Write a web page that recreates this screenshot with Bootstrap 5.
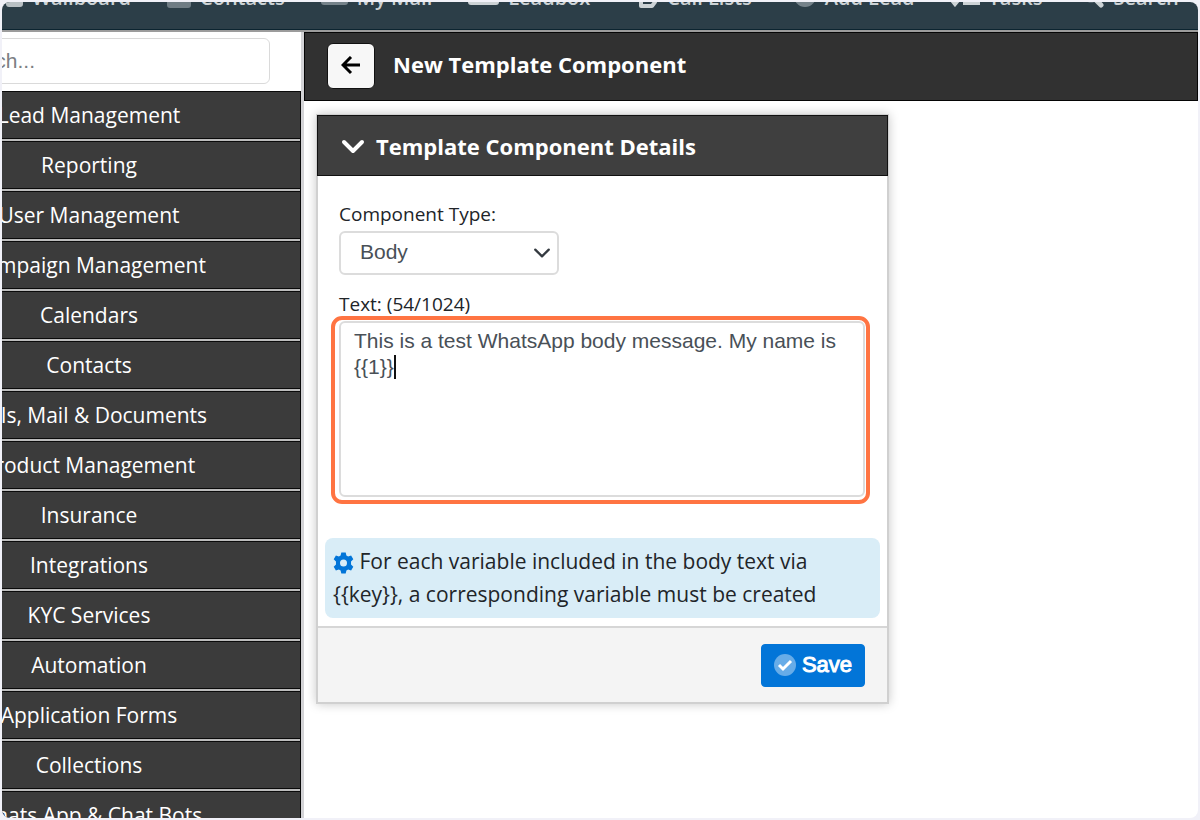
<!DOCTYPE html>
<html lang="en">
<head>
<meta charset="utf-8">
<meta name="viewport" content="width=device-width, initial-scale=1">
<title>New Template Component</title>
<link rel="stylesheet" href="https://cdn.jsdelivr.net/npm/bootstrap@5.3.0/dist/css/bootstrap.min.css">
<style>
body { background: #f1f1f8; font-family: "Open Sans", "Noto Sans", sans-serif; color: #212529; }
.app-frame { height: 100vh; padding: 2px; }
.app-window { background: #fff; border-radius: 8px; }
/* the top bar and the side menu are scrolled partly out of the window */
.top-bar { background: #2c3e48; border-bottom: 1px solid #0c2430; height: 28px; }
.top-bar nav { margin-top: -18px; gap: 36px; }
.top-bar a { color: #ccd2d5; font-size: 20px; font-weight: 600; line-height: 28px; gap: 9px; }
.below-bar { border-top: 2px solid #9c9c9c; }
.side-menu { width: 302px; border-right: 3px solid #d3d3d6; }
.side-inner { width: 424px; margin-left: -125px; }
.side-search { padding: 6px 31px 7px; }
.side-search input { height: 46px; font-family: "Liberation Sans", sans-serif; font-size: 21px; border-color: #dadada; padding-left: 42px; }
.side-search input::placeholder { color: #7c8084; }
.side-item { height: 50px; background: #3b3b3b; border: 1px solid #0a0a0a; border-bottom: 0; color: #fff; font-size: 21px; font-weight: 500; box-shadow: inset 0 -2px #bcbcbc, inset 0 -3px #0a0a0a; padding-bottom: 2px; }
.page-head { background: #313131; border: 1px solid #050505; height: 69px; padding: 0 23px 2px 22px; gap: 18px; }
.page-head h1 { font-size: 22px; font-weight: 700; line-height: 30px; padding-bottom: 4px; }
.back-btn { width: 48px; height: 46px; background: #f7f7f7; border: 1px solid #111; border-radius: 6px; }
.main-area { padding: 13px 12px; }
.details-card { max-width: 573px; border: 2px solid #d0d0d0; border-radius: 0; box-shadow: 0 0 10px rgba(0,0,0,.22); }
.details-head { height: 61px; margin: -1px -1px 0; background: #3f3f3f; border: 1px solid #111; padding: 0 23px; gap: 11px; }
.details-head h2 { font-size: 22px; font-weight: 700; line-height: 32px; }
.details-body { padding: 25px 22px 0 21px; }
.field-label { font-size: 19px; line-height: 26px; margin-bottom: 4px; }
.type-select { width: 220px; height: 44px; font-family: "Liberation Sans", sans-serif; font-size: 21px; line-height: 28px; padding: 4px 40px 6px 19px; color: #495057; border: 2px solid #dcdcdc; background-position: right 6px center; background-size: 18px 18px; margin-bottom: 16px; }
.text-wrap::after { content: ""; position: absolute; inset: -5px -5px -7px -8px; border: 4px solid #ff7442; border-radius: 11px; pointer-events: none; }
.text-wrap textarea { display: block; height: 176px; resize: none; font-family: "Liberation Sans", sans-serif; font-size: 21px; line-height: 26px; padding: 5px 8px 6px 13px; color: #495057; border: 2px solid #dcdcdc; }
.caret { position: absolute; left: 55px; top: 34px; width: 2px; height: 24px; background: #111; }
.hint { background: #d9edf7; border-radius: 8px; margin: 41px 7px 8px; padding: 7px 24px 7px 8px; font-size: 21px; line-height: 33px; }
.details-foot { background: #f4f4f4; border-top: 2px solid #d6d6d6; padding: 16px 22px 15px; }
.save-btn { --bs-btn-bg: #0275d8; --bs-btn-border-color: #0275d8; width: 104px; height: 43px; padding: 0 0 2px; gap: 6px; font-family: "Liberation Sans", sans-serif; font-size: 22px; line-height: 28px; border-radius: 4px; -webkit-text-stroke: 1px #fff; }
</style>
<script src="https://cdn.jsdelivr.net/npm/bootstrap@5.3.0/dist/js/bootstrap.bundle.min.js"></script>
</head>
<body>
<div class="app-frame">
<div class="app-window h-100 overflow-hidden d-flex flex-column">
  <header class="top-bar flex-shrink-0 overflow-hidden">
    <nav class="d-flex text-nowrap ps-1">
      <a href="#" class="d-flex align-items-center text-decoration-none"><svg width="17" height="18" viewBox="0 0 17 18"><rect width="17" height="18" rx="3" fill="#b9c0c4"/></svg>Wallboard</a>
      <a href="#" class="d-flex align-items-center text-decoration-none"><svg width="24" height="20" viewBox="0 0 24 20"><rect width="24" height="20" rx="3" fill="#6f7c84"/></svg>Contacts</a>
      <a href="#" class="d-flex align-items-center text-decoration-none"><svg width="27" height="18" viewBox="0 0 27 18"><rect width="27" height="16" rx="3" fill="#75828a"/></svg>My Mail</a>
      <a href="#" class="d-flex align-items-center text-decoration-none"><svg width="31" height="18" viewBox="0 0 31 18"><rect width="31" height="16" rx="3" fill="#ccd2d5"/></svg>Leadbox</a>
      <a href="#" class="d-flex align-items-center text-decoration-none"><svg width="32" height="20" viewBox="0 0 32 20"><path d="M15 2h14v12l-3 4H15z" fill="none" stroke="#ccd2d5" stroke-width="4" stroke-linejoin="round"/></svg>Call Lists</a>
      <a href="#" class="d-flex align-items-center text-decoration-none"><svg width="28" height="20" viewBox="0 0 28 20"><circle cx="17" cy="8" r="11" fill="#75828a"/></svg>Add Lead</a>
      <a href="#" class="d-flex align-items-center text-decoration-none"><svg width="29" height="18" viewBox="0 0 29 18"><path d="M0 10l4 5 5-6M12 14h17" fill="none" stroke="#ccd2d5" stroke-width="4"/></svg>Tasks</a>
      <a href="#" class="d-flex align-items-center text-decoration-none"><svg width="26" height="22" viewBox="0 0 26 22"><circle cx="13" cy="6" r="8" fill="none" stroke="#75828a" stroke-width="3"/><path d="M17 12l6 6" stroke="#ccd2d5" stroke-width="5" stroke-linecap="round"/></svg>Search</a>
    </nav>
  </header>
  <div class="below-bar d-flex flex-grow-1 overflow-hidden">
    <aside class="side-menu flex-shrink-0 overflow-hidden">
      <div class="side-inner">
        <div class="side-search"><input type="search" class="form-control" placeholder="Search..." aria-label="Search"></div>
        <nav class="text-center">
          <a href="#" class="side-item d-flex align-items-center justify-content-center text-decoration-none">Lead Management</a>
          <a href="#" class="side-item d-flex align-items-center justify-content-center text-decoration-none">Reporting</a>
          <a href="#" class="side-item d-flex align-items-center justify-content-center text-decoration-none">User Management</a>
          <a href="#" class="side-item d-flex align-items-center justify-content-center text-decoration-none">Campaign Management</a>
          <a href="#" class="side-item d-flex align-items-center justify-content-center text-decoration-none">Calendars</a>
          <a href="#" class="side-item d-flex align-items-center justify-content-center text-decoration-none">Contacts</a>
          <a href="#" class="side-item d-flex align-items-center justify-content-center text-decoration-none">Calls, Mail &amp; Documents</a>
          <a href="#" class="side-item d-flex align-items-center justify-content-center text-decoration-none">Product Management</a>
          <a href="#" class="side-item d-flex align-items-center justify-content-center text-decoration-none">Insurance</a>
          <a href="#" class="side-item d-flex align-items-center justify-content-center text-decoration-none">Integrations</a>
          <a href="#" class="side-item d-flex align-items-center justify-content-center text-decoration-none">KYC Services</a>
          <a href="#" class="side-item d-flex align-items-center justify-content-center text-decoration-none">Automation</a>
          <a href="#" class="side-item d-flex align-items-center justify-content-center text-decoration-none">Application Forms</a>
          <a href="#" class="side-item d-flex align-items-center justify-content-center text-decoration-none">Collections</a>
          <a href="#" class="side-item d-flex align-items-center justify-content-center text-decoration-none">Whats App &amp; Chat Bots</a>
        </nav>
      </div>
    </aside>
    <main class="flex-grow-1">
      <div class="page-head d-flex align-items-center text-white">
        <button type="button" class="back-btn d-flex align-items-center justify-content-center p-0" aria-label="Back">
          <svg width="20" height="20" viewBox="0 0 20 20" fill="none" stroke="#000" stroke-width="3"><path d="M10 1L2 9l8 8M2 9h17"/></svg>
        </button>
        <h1 class="mb-0">New Template Component</h1>
      </div>
      <div class="main-area">
      <form class="details-card card">
        <div class="details-head card-header rounded-0 d-flex align-items-center text-white">
          <svg width="24" height="16" viewBox="0 0 24 16" fill="none" stroke="#fff" stroke-width="4" stroke-linecap="round" stroke-linejoin="round"><path d="M3 4l9 9 9-9"/></svg>
          <h2 class="mb-0">Template Component Details</h2>
        </div>
        <div class="details-body">
          <label for="ctype" class="field-label d-block">Component Type:</label>
          <select id="ctype" class="form-select type-select"><option>Body</option></select>
          <label for="ctext" class="field-label d-block">Text: (54/1024)</label>
          <div class="text-wrap position-relative">
            <textarea id="ctext" class="form-control">This is a test WhatsApp body message. My name is {{1}}</textarea>
            <span class="caret" aria-hidden="true"></span>
          </div>
        </div>
        <div class="hint">
          <svg width="21" height="22" viewBox="0 0 24 24"><path fill="#0275d8" fill-rule="evenodd" d="M9.500 0h5l.8 3.400 2 1.100 3.400-1 2.500 4.300-2.600 2.500v3.400l2.600 2.500-2.500 4.300-3.400-1-2 1.100-.8 3.400h-5l-.8-3.400-2-1.100-3.400 1L.8 16.200l2.600-2.500v-3.400L.8 7.800l2.500-4.300 3.400 1 2-1.100zM12 8a4 4 0 100 8 4 4 0 000-8z"/></svg>
          For each variable included in the body text via {{key}}, a corresponding variable must be created
        </div>
        <div class="details-foot card-footer rounded-0 d-flex justify-content-end">
          <button type="button" class="save-btn btn btn-primary d-flex align-items-center justify-content-center">
            <svg width="22" height="22" viewBox="0 0 22 22"><circle cx="11" cy="11" r="11" fill="#67ace8"/><path d="M5 11l4 4 8-8" fill="none" stroke="#fff" stroke-width="3"/></svg>Save
          </button>
        </div>
      </form>
      </div>
    </main>
  </div>
</div>
</div>
</body>
</html>
